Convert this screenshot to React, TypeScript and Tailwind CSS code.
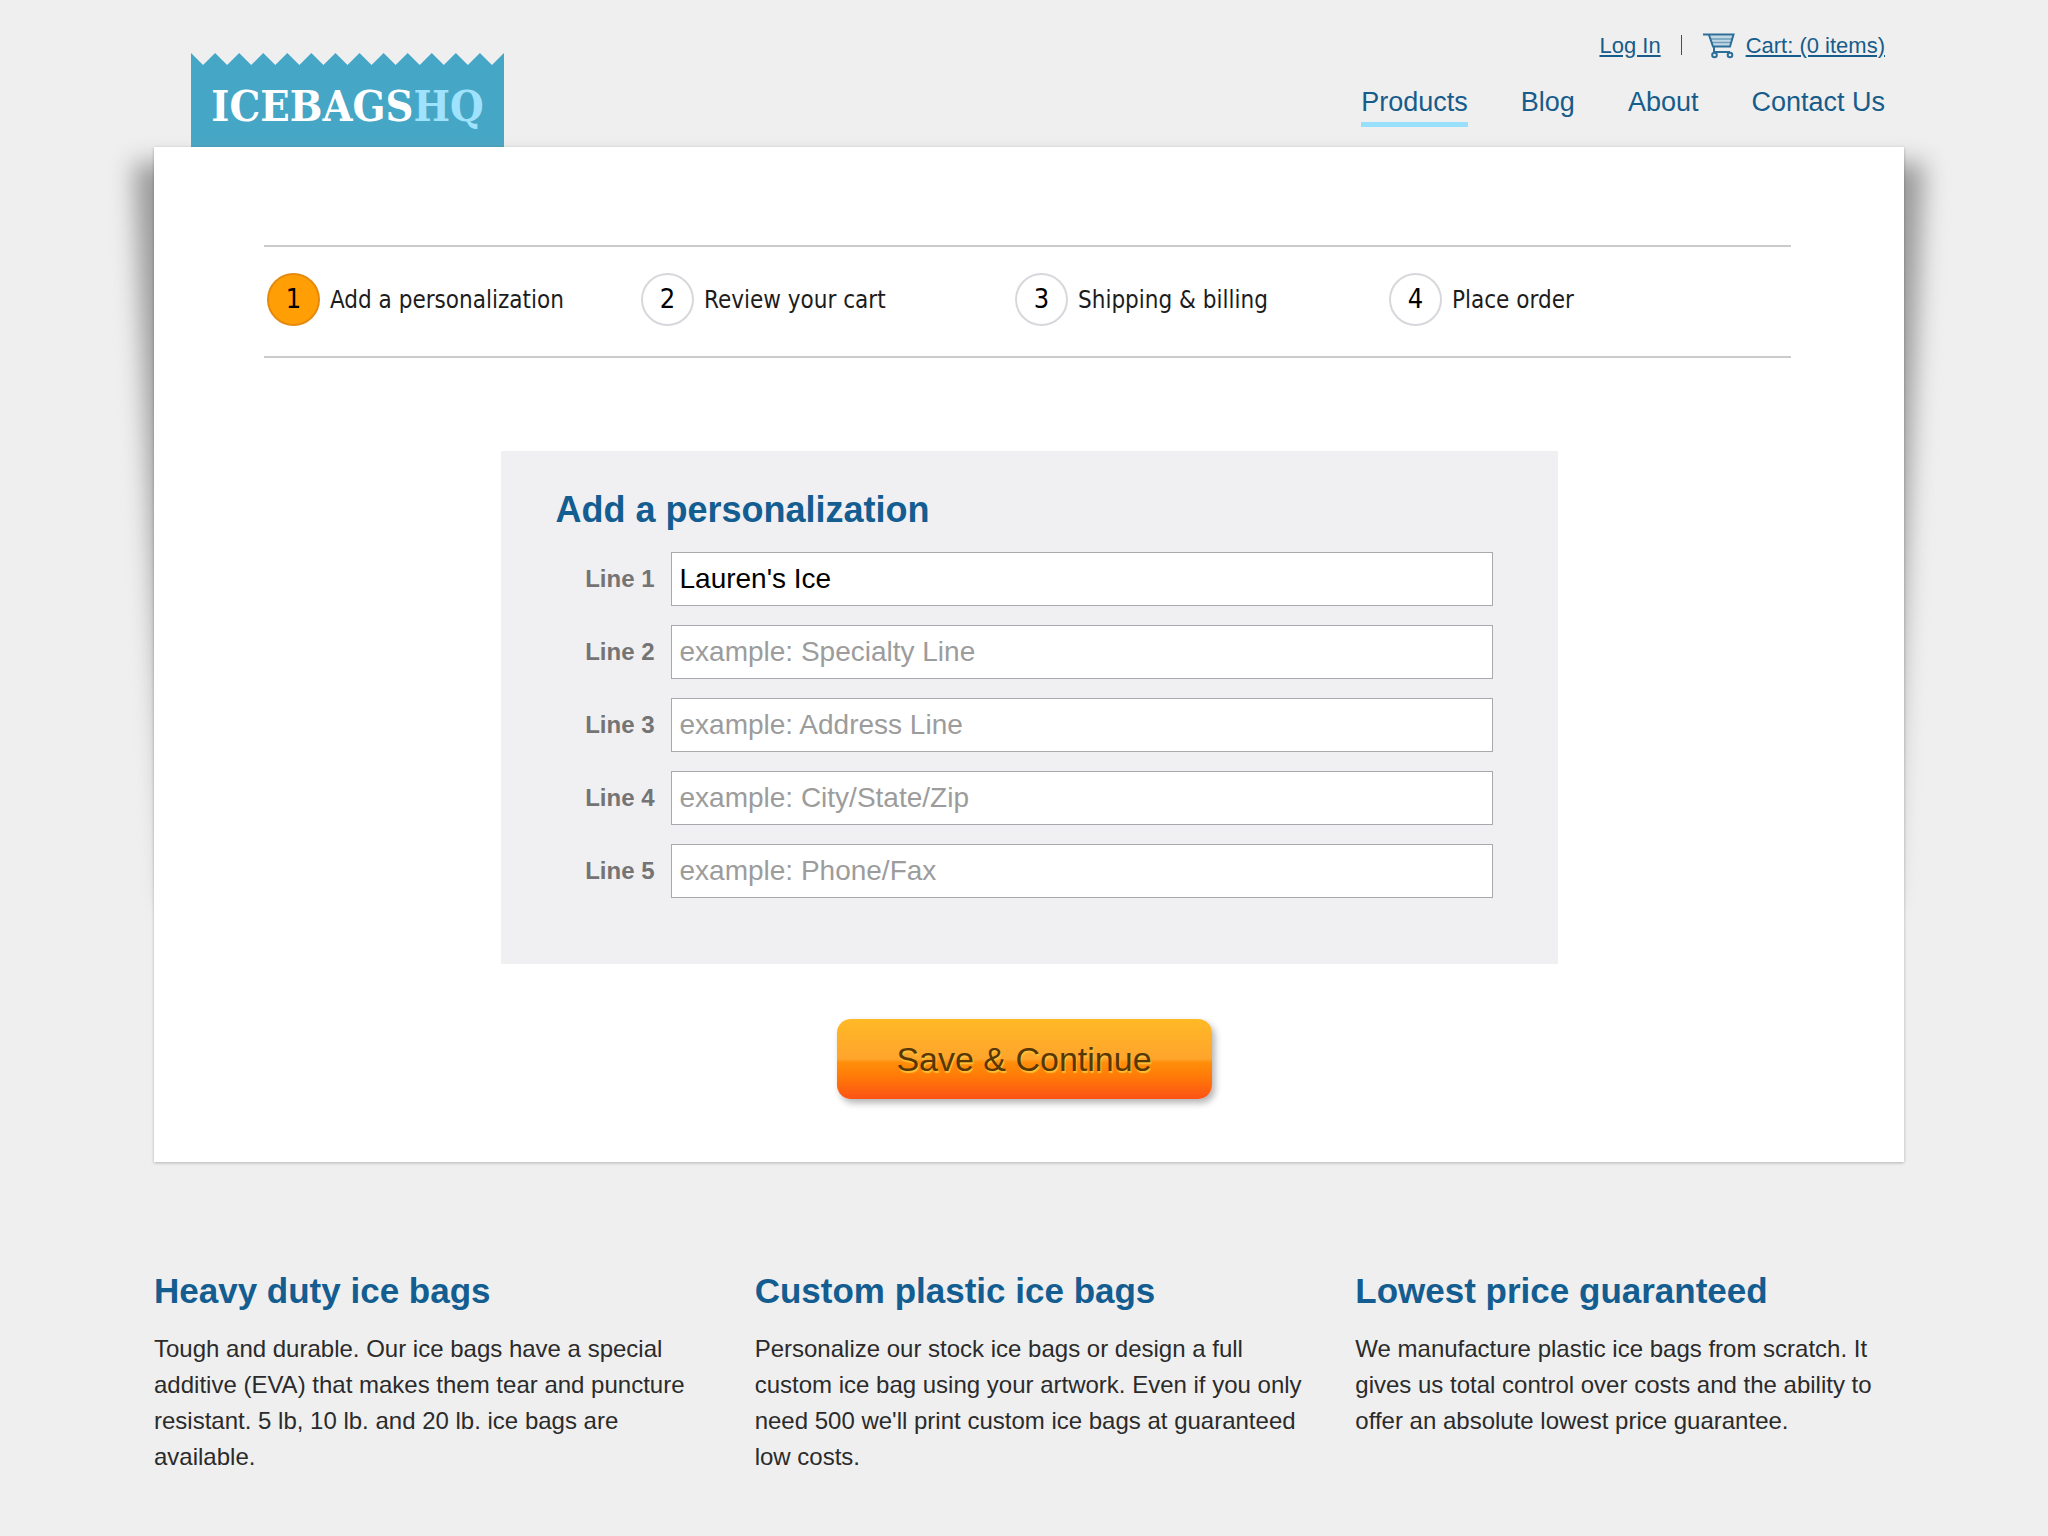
import React, { useState } from 'react'

const navLinks = ['Products', 'Blog', 'About', 'Contact Us']

const steps = ['Add a personalization', 'Review your cart', 'Shipping & billing', 'Place order']

const lines = [
  { id: 'line1', label: 'Line 1', placeholder: '' },
  { id: 'line2', label: 'Line 2', placeholder: 'example: Specialty Line' },
  { id: 'line3', label: 'Line 3', placeholder: 'example: Address Line' },
  { id: 'line4', label: 'Line 4', placeholder: 'example: City/State/Zip' },
  { id: 'line5', label: 'Line 5', placeholder: 'example: Phone/Fax' },
]

const features = [
  {
    title: 'Heavy duty ice bags',
    text: 'Tough and durable. Our ice bags have a special additive (EVA) that makes them tear and puncture resistant. 5 lb, 10 lb. and 20 lb. ice bags are available.',
  },
  {
    title: 'Custom plastic ice bags',
    text: "Personalize our stock ice bags or design a full custom ice bag using your artwork. Even if you only need 500 we'll print custom ice bags at guaranteed low costs.",
  },
  {
    title: 'Lowest price guaranteed',
    text: 'We manufacture plastic ice bags from scratch. It gives us total control over costs and the ability to offer an absolute lowest price guarantee.',
  },
]

const Logo: React.FC = () => {
  // torn bag edge, 13 teeth of 24px
  const teeth = Array.from({ length: 13 }, (_, i) => `${i * 24},0 ${i * 24 + 12},12`).join(' ')

  return (
    <a href="#" className="relative block h-[94px] w-[313px]">
      <svg viewBox="0 0 312 94" preserveAspectRatio="none" className="absolute inset-0 h-full w-full" aria-hidden="true">
        <polygon points={`${teeth} 312,0 312,94 0,94`} fill="#46a6c5" />
      </svg>
      <span className="relative flex h-full items-center justify-center pt-3 font-['DejaVu_Serif_Condensed','DejaVu_Serif',serif] text-[43px] font-bold leading-none text-white">
        ICEBAGS<span className="text-[#9fe2fd]">HQ</span>
      </span>
    </a>
  )
}

const CartIcon: React.FC = () => (
  <svg width="34" height="27" viewBox="0 0 34 27" fill="none" stroke="#2d6f99" strokeWidth="2" aria-hidden="true">
    <path d="M7.500 3.500L31 3.500L28.500 14L11 14Z" fill="#c3d8e6" stroke="none" />
    <path d="M8.500 7H30M9.500 10.500H29" stroke="#6f9dbb" strokeWidth="1.500" />
    <path d="M1 2.500H31.500L28 14.500H11L7 3M12 14.500V20H28" />
    <circle cx="12.500" cy="23" r="2.300" fill="#efeff0" />
    <circle cx="28" cy="23" r="2.300" fill="#efeff0" />
  </svg>
)

const Header: React.FC = () => (
  <header className="flex items-end justify-between pl-[37px] pr-[19px] pt-[25px]">
    <Logo />
    <div className="flex flex-col items-end self-start pb-5 text-[#175c8a]">
      <div className="flex h-10 items-center text-[22px]">
        <a href="#" className="underline">Log In</a>
        <span className="mx-5 h-5 w-px bg-[#175c8a]" />
        <a href="#" className="flex items-center gap-2.5">
          <CartIcon />
          <span className="underline">Cart: (0 items)</span>
        </a>
      </div>
      <nav className="mt-[19px] flex gap-[53px] text-[27px] leading-9">
        {navLinks.map((link) => (
          <a
            key={link}
            href="#"
            className={link === 'Products' ? 'border-b-[5px] border-[#98dffb] pb-0.5' : 'pb-0.5'}
          >
            {link}
          </a>
        ))}
      </nav>
    </div>
  </header>
)

const Steps: React.FC = () => (
  <ol className="flex h-[113px] items-center border-y-2 border-[#cbcbcb] pl-[3px] font-['DejaVu_Sans_Condensed','DejaVu_Sans',sans-serif] text-[#1c1c1c]">
    {steps.map((step, index) => (
      <li key={step} className="flex w-[374px] items-center gap-2.5 pb-1">
        <span
          className={
            index === 0
              ? 'flex size-[53px] items-center justify-center rounded-full border-2 border-[#e58a0c] bg-[#ff9f05] text-[27px] text-black'
              : 'flex size-[53px] items-center justify-center rounded-full border-2 border-[#d9d6dc] bg-white text-[27px] text-black'
          }
        >
          {index + 1}
        </span>
        <span className="whitespace-nowrap text-[24px]">{step}</span>
      </li>
    ))}
  </ol>
)

const App: React.FC = () => {
  const [values, setValues] = useState<Record<string, string>>({ line1: "Lauren's Ice" })

  return (
    <div className="min-h-screen bg-[#efeff0] pl-2.5 font-['Liberation_Sans',Arial,sans-serif]">
      <div className="mx-auto max-w-[1750px]">
        <Header />

        <div className="relative isolate">
          {/* Curled shadow at both sides of the sheet */}
          <div className="absolute inset-x-[-20px] top-4 -z-10 h-[740px] blur-[12px]">
            <div className="h-full bg-[#999999] [clip-path:polygon(0_0,100%_0,98%_100%,2%_100%)]" />
          </div>

          <main className="bg-white pb-[63px] pl-[110px] pr-[113px] pt-[98px] shadow-[0_1px_3px_rgba(0,0,0,0.25)]">
            <Steps />

            <form onSubmit={(e) => e.preventDefault()} className="pl-[3px]">
              <div className="mx-auto mt-[93px] max-w-[1057px] bg-[#f0eff1] pb-[66px] pl-[55px] pr-[65px] pt-[39px]">
                <h2 className="mb-[22px] text-[36px] font-bold leading-10 text-[#135d91]">Add a personalization</h2>
                <div className="flex flex-col gap-[19px]">
                  {lines.map((line) => (
                    <div key={line.id} className="flex items-center gap-4">
                      <label htmlFor={line.id} className="w-[99px] text-right text-[24px] font-bold text-[#747474]">
                        {line.label}
                      </label>
                      <input
                        id={line.id}
                        type="text"
                        value={values[line.id] || ''}
                        placeholder={line.placeholder}
                        onChange={(e) => setValues({ ...values, [line.id]: e.target.value })}
                        className="h-[54px] min-w-0 grow border border-[#a9a8ac] bg-white px-2 text-[28px] text-black placeholder:text-[#9c9c9c]"
                      />
                    </div>
                  ))}
                </div>
              </div>

              <div className="mt-[55px] flex justify-center pr-2.5">
                <button
                  type="submit"
                  className="h-20 w-[375px] rounded-[14px] bg-[linear-gradient(to_bottom,#ffb926_0%,#ffa42c_50%,#ff8f0a_54%,#ff7a08_72%,#fd5215_100%)] text-[34px] text-[#573703] shadow-[3px_4px_7px_rgba(0,0,0,0.3)] [text-shadow:1px_2px_1px_#ffc038]"
                >
                  Save &amp; Continue
                </button>
              </div>
            </form>
          </main>
        </div>

        <section className="grid grid-cols-3 gap-[52px] pb-10 pt-[109px]">
          {features.map((feature) => (
            <div key={feature.title}>
              <h2 className="mb-5 text-[35px] font-bold leading-10 text-[#135d91]">{feature.title}</h2>
              <p className="text-[24px] leading-9 text-[#2b2b2b]">{feature.text}</p>
            </div>
          ))}
        </section>
      </div>
    </div>
  )
}

export default App
